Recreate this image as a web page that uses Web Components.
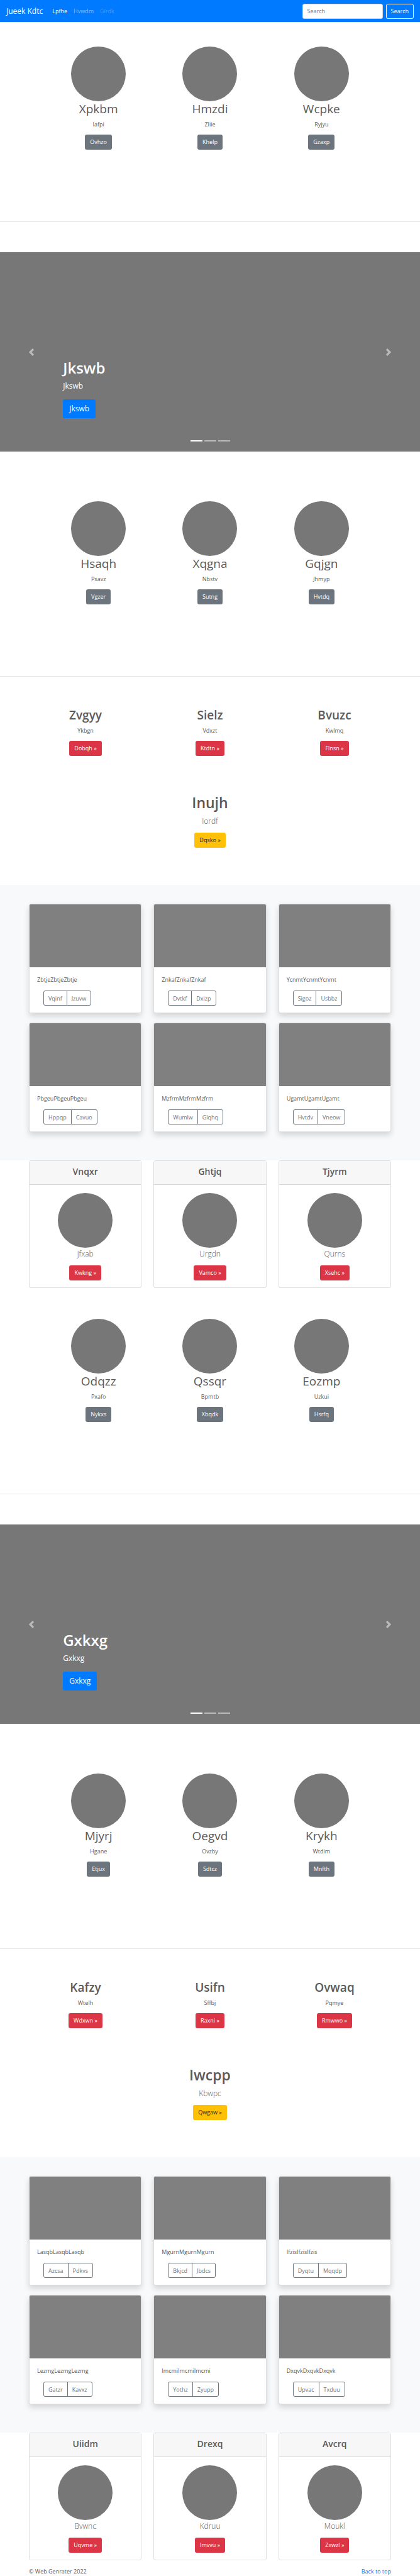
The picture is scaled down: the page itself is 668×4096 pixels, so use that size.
<!DOCTYPE html>
<html lang="en">
<head>
<meta charset="utf-8">
<title>Jueek Kdtc</title>
<style>
  body {
    margin: 0;
    background: #fff;
    color: #5a5a5a;
    font-family: "Open Sans", "Noto Sans", sans-serif;
    font-size: 9px;
    line-height: 15px;
  }
</style>
</head>
<body>
<site-nav id="top" brand="Jueek Kdtc"></site-nav>
<page-body></page-body>

<script>
const base = `
  *, *::before, *::after { box-sizing: border-box; }
  h1, h2, h4, p { margin: 0; }
  a { text-decoration: none; }
  button, input { font: inherit; margin: 0; }
`;

const attr = (el, name) => el.getAttribute(name) || '';

function define(name, render) {
  customElements.define(name, class extends HTMLElement {
    connectedCallback() {
      if (this.shadowRoot) return;
      const root = this.attachShadow({ mode: 'open' });
      root.innerHTML = render(this);
    }
  });
}

/* Link styled as a solid button; tone = danger | warning | primary, grey without one */
define('link-button', el => `
  <style>${base}
    :host { display: inline-block; vertical-align: top; }
    a {
      display: block;
      padding: 4px 8px 5px;
      border-radius: 3px;
      background: #6c757d;
      color: #fff;
      white-space: nowrap;
    }
    :host([tone="danger"]) a { background: #dc3545; }
    :host([tone="warning"]) a { background: #ffc107; color: #212529; }
    :host([tone="primary"]) a {
      background: #007bff;
      padding: 6px 10px;
      font-size: 12px;
      line-height: 18px;
    }
  </style>
  <a href="#"><slot></slot></a>`);

define('site-nav', el => `
  <style>${base}
    :host { display: block; background: #007bff; color: #fff; }
    nav { display: flex; align-items: center; height: 35px; padding: 0 10px; }
    .brand { color: #fff; font-size: 12px; line-height: 18px; margin-right: 10px; }
    ul { display: flex; flex: 1; margin: 0; padding: 0; list-style: none; }
    li a { display: block; padding: 0 5px; color: rgba(255,255,255,.5); }
    li a.active { color: #fff; }
    li a.disabled { color: rgba(255,255,255,.25); }
    form { display: flex; gap: 5px; }
    input {
      width: 128px; height: 24px; padding: 0 7px;
      border: 1px solid #ced4da; border-radius: 3px;
      background: #fff; color: #495057;
    }
    input::placeholder { color: #6c757d; opacity: 1; }
    button {
      height: 24px; padding: 0 7px;
      border: 1px solid #f8f9fa; border-radius: 3px;
      background: transparent; color: #f8f9fa;
    }
  </style>
  <nav>
    <a class="brand" href="#">${attr(el, 'brand')}</a>
    <ul>
      <li><a class="active" href="#">Lpfhe</a></li>
      <li><a href="#">Hvwdm</a></li>
      <li><a class="disabled" href="#" aria-disabled="true">Glrdk</a></li>
    </ul>
    <form>
      <input type="text" placeholder="Search" aria-label="Search">
      <button type="button">Search</button>
    </form>
  </nav>`);

/* Three centred columns of feature items, closed by a rule */
define('feature-row', el => `
  <style>${base}
    :host { display: block; border-bottom: 1px solid rgba(0,0,0,.1); }
    div { display: grid; grid-template-columns: repeat(3, 1fr); padding: 39px 68px 114px; }
    :host([after="hero"]) div { padding-top: 79px; }
    :host([after="cards"]) div { padding-top: 49px; }
  </style>
  <div><slot></slot></div>`);

define('feature-item', el => `
  <style>${base}
    :host { display: flex; flex-direction: column; align-items: center; }
    .disc { width: 87px; height: 87px; border-radius: 50%; background: #777; }
    h2 { font-size: 19px; line-height: 24px; font-weight: 400; margin-bottom: 5px; }
    p { margin-bottom: 9px; }
  </style>
  <div class="disc"></div>
  <h2>${attr(el, 'heading')}</h2>
  <p>${attr(el, 'text')}</p>
  <link-button>${attr(el, 'action')}</link-button>`);

define('hero-carousel', el => `
  <style>${base}
    :host { display: block; margin-top: 48px; background: #777; color: #fff; }
    section {
      display: grid;
      grid-template-columns: 15% 1fr 15%;
      min-height: 317px;
    }
    .control {
      display: grid; place-items: center; padding: 0;
      border: 0; background: none; opacity: .5;
    }
    svg { width: 12px; height: 12px; fill: #fff; }
    .middle { display: flex; flex-direction: column; justify-content: flex-end; }
    h1 { font-size: 24px; line-height: 30px; font-weight: 600; margin-bottom: 5px; }
    p { font-size: 12px; line-height: 18px; margin-bottom: 12px; }
    .dots { display: flex; justify-content: center; gap: 3px; padding: 35px 0 16px; }
    .dots button { width: 19px; height: 2px; padding: 0; border: 0; background: #fff; opacity: .5; }
    .dots button.on { opacity: 1; }
  </style>
  <section>
    <button class="control" aria-label="Previous"><svg viewBox="0 0 8 8"><path d="M5.25 0l-4 4 4 4 1.5-1.5L4.25 4l2.5-2.5L5.25 0z"/></svg></button>
    <div class="middle">
      <h1>${attr(el, 'name')}</h1>
      <p>${attr(el, 'name')}</p>
      <div><link-button tone="primary">${attr(el, 'name')}</link-button></div>
      <div class="dots">
        <button class="on" aria-label="Slide 1"></button>
        <button aria-label="Slide 2"></button>
        <button aria-label="Slide 3"></button>
      </div>
    </div>
    <button class="control" aria-label="Next"><svg viewBox="0 0 8 8"><path d="M2.75 0l-1.5 1.5L3.75 4l-2.5 2.5L2.75 8l4-4-4-4z"/></svg></button>
  </section>`);

define('promo-row', el => `
  <style>${base}
    :host { display: block; }
    div { display: grid; grid-template-columns: repeat(3, 1fr); padding: 49px 37px 59px; }
  </style>
  <div><slot></slot></div>`);

define('promo-item', el => `
  <style>${base}
    :host { display: flex; flex-direction: column; align-items: center; }
    h2 { font-size: 19px; line-height: 24px; font-weight: 600; margin-bottom: 5px; }
    p { margin-bottom: 9px; }
  </style>
  <h2>${attr(el, 'heading')}</h2>
  <p>${attr(el, 'text')}</p>
  <link-button tone="danger">${attr(el, 'action')} »</link-button>`);

define('call-out', el => `
  <style>${base}
    :host { display: flex; flex-direction: column; align-items: center; padding-bottom: 59px; }
    h1 { font-size: 23px; line-height: 30px; font-weight: 600; margin-bottom: 5px; }
    p { font-size: 12px; line-height: 19px; font-weight: 300; margin-bottom: 9px; }
  </style>
  <h1>${attr(el, 'heading')}</h1>
  <p>${attr(el, 'text')}</p>
  <link-button tone="warning">${attr(el, 'action')} »</link-button>`);

define('card-album', el => `
  <style>${base}
    :host { display: block; background: #f8f9fa; }
    div { display: grid; grid-template-columns: repeat(3, 1fr); gap: 15px 19px; padding: 30px 46px 45px; }
  </style>
  <div><slot></slot></div>`);

define('media-card', el => `
  <style>${base}
    :host {
      display: block; box-sizing: border-box; background: #fff;
      border: 1px solid rgba(0,0,0,.125); border-radius: 3px;
      box-shadow: 0 5px 10px rgba(0,0,0,.15);
    }
    .media { height: 100px; border-radius: 2px 2px 0 0; background: #808080; }
    .body { padding: 12px 12px 11px; }
    p { margin-bottom: 10px; }
    .group { display: flex; margin-left: 10px; }
    button {
      height: 24px; padding: 0 7px;
      border: 1px solid #6c757d; background: none; color: #6c757d;
    }
    button:first-child { border-radius: 3px 0 0 3px; }
    button:last-child { border-radius: 0 3px 3px 0; margin-left: -1px; }
  </style>
  <div class="media"></div>
  <div class="body">
    <p>${attr(el, 'text').repeat(3)}</p>
    <div class="group" role="group">
      <button>${attr(el, 'first')}</button><button>${attr(el, 'second')}</button>
    </div>
  </div>`);

define('profile-row', el => `
  <style>${base}
    :host { display: block; }
    div { display: grid; grid-template-columns: repeat(3, 1fr); gap: 19px; padding: 0 46px; }
  </style>
  <div><slot></slot></div>`);

define('profile-card', el => `
  <style>${base}
    :host { display: block; box-sizing: border-box; border: 1px solid rgba(0,0,0,.125); border-radius: 3px; }
    header { padding: 8px 12px 11px; background: #f7f7f7; border-bottom: 1px solid rgba(0,0,0,.125); }
    h4 { font-size: 14px; line-height: 18px; font-weight: 600; text-align: center; }
    .body { display: flex; flex-direction: column; align-items: center; padding: 13px 12px 11px; }
    .disc { width: 87px; height: 87px; border-radius: 50%; background: #777; }
    p { font-size: 12px; line-height: 19px; font-weight: 300; margin-bottom: 9px; }
  </style>
  <header><h4>${attr(el, 'heading')}</h4></header>
  <div class="body">
    <div class="disc"></div>
    <p>${attr(el, 'text')}</p>
    <link-button tone="danger">${attr(el, 'action')} »</link-button>
  </div>`);

define('site-footer', el => `
  <style>${base}
    :host { display: block; }
    footer { display: flex; justify-content: space-between; padding: 10px 46px 0; }
    a { color: #007bff; }
  </style>
  <footer><span>© Web Genrater 2022</span><a href="#top">Back to top</a></footer>`);

const items = (tag, keys, rows) => rows.map(row =>
  `<${tag} ${keys.map((k, i) => `${k}="${row[i]}"`).join(' ')}></${tag}>`).join('');
const trio = ['heading', 'text', 'action'];
const features = (after, rows) => `<feature-row after="${after}">${items('feature-item', trio, rows)}</feature-row>`;
const promos = rows => `<promo-row>${items('promo-item', trio, rows)}</promo-row>`;
const callout = row => items('call-out', trio, [row]);
const album = rows => `<card-album>${items('media-card', ['text', 'first', 'second'], rows)}</card-album>`;
const profiles = rows => `<profile-row>${items('profile-card', trio, rows)}</profile-row>`;

define('page-body', el => `
  <style>:host { display: block; }</style>
  <main>
  ${features('nav', [['Xpkbm', 'Iafpi', 'Ovhzo'], ['Hmzdi', 'Zliie', 'Khelp'], ['Wcpke', 'Ryjyu', 'Gzaxp']])}
  <hero-carousel name="Jkswb"></hero-carousel>
  ${features('hero', [['Hsaqh', 'Psavz', 'Vgzer'], ['Xqgna', 'Nbstv', 'Sutng'], ['Gqjgn', 'Jhmyp', 'Hvtdq']])}
  ${promos([['Zvgyy', 'Ykbgn', 'Dobqh'], ['Sielz', 'Vdxzt', 'Ktdtn'], ['Bvuzc', 'Kwlmq', 'Flnsn']])}
  ${callout(['Inujh', 'Iordf', 'Dqsko'])}
  ${album([['Zbtje', 'Vqinf', 'Jzuvw'], ['Znkaf', 'Dvtkf', 'Dxizp'], ['Ycnmt', 'Sigoz', 'Usbbz'],
           ['Pbgeu', 'Hppqp', 'Cavuo'], ['Mzfrm', 'Wumlw', 'Glqhq'], ['Ugamt', 'Hvtdv', 'Vneow']])}
  ${profiles([['Vnqxr', 'Jfxab', 'Kwkng'], ['Ghtjq', 'Urgdn', 'Vamco'], ['Tjyrm', 'Qurns', 'Xsehc']])}
  ${features('cards', [['Odqzz', 'Pxafo', 'Nykxs'], ['Qssqr', 'Bpmtb', 'Xbqdk'], ['Eozmp', 'Uzkui', 'Hsrfq']])}
  <hero-carousel name="Gxkxg"></hero-carousel>
  ${features('hero', [['Mjyrj', 'Hgane', 'Etjux'], ['Oegvd', 'Ovzby', 'Sdtcz'], ['Krykh', 'Wtdim', 'Mnfth']])}
  ${promos([['Kafzy', 'Wtelh', 'Wdxwn'], ['Usifn', 'Sffbj', 'Raxni'], ['Ovwaq', 'Pqmye', 'Rmwwo']])}
  ${callout(['Iwcpp', 'Kbwpc', 'Qwgaw'])}
  ${album([['Lasqb', 'Azcsa', 'Pdkvs'], ['Mgurn', 'Bkjcd', 'Jbdcs'], ['Ifzis', 'Dyqtu', 'Mqqdp'],
           ['Lezmg', 'Gatzr', 'Kavxz'], ['Imcmi', 'Yothz', 'Zyupp'], ['Dxqvk', 'Upvac', 'Txduu']])}
  ${profiles([['Uiidm', 'Bvwnc', 'Uqvme'], ['Drexq', 'Kdruu', 'Imvvu'], ['Avcrq', 'Moukl', 'Zxwzl']])}
  </main>
  <site-footer></site-footer>`);
</script>
</body>
</html>
